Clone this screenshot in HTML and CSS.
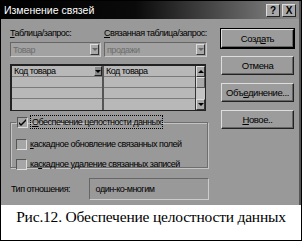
FILE: index.html
```html
<!DOCTYPE html>
<html lang="ru">
<head>
    <meta charset="UTF-8">
    <title>Изменение связей</title>
    <link rel="stylesheet" href="styles.css">
</head>
<body>
    <div class="frame">
        <div class="dialog">
            <div class="titlebar">
                <span class="title">Изменение связей</span>
                <div class="title-buttons">
                    <span class="tbtn">?</span>
                    <span class="tbtn">X</span>
                </div>
            </div>

            <div class="content">
                <div class="main">
                    <div class="labels">
                        <span class="label-left"><u>Т</u>аблица/запрос:</span>
                        <span class="label-right"><u>С</u>вязанная таблица/запрос:</span>
                    </div>

                    <div class="combos">
                        <div class="combo combo-left">
                            <span class="combo-text">Товар</span>
                            <span class="drop"><i class="arrow-down"></i></span>
                        </div>
                        <div class="combo combo-right">
                            <span class="combo-text">продажи</span>
                            <span class="drop"><i class="arrow-down"></i></span>
                        </div>
                    </div>

                    <div class="grid">
                        <div class="col col-left">
                            <div class="cell">Код товара <span class="drop cell-drop"><i class="arrow-down"></i></span></div>
                            <div class="cell"></div>
                            <div class="cell"></div>
                            <div class="cell last"></div>
                        </div>
                        <div class="col col-right">
                            <div class="cell">Код товара</div>
                            <div class="cell"></div>
                            <div class="cell"></div>
                            <div class="cell last"></div>
                        </div>
                        <div class="scrollbar">
                            <span class="sbtn"><i class="arrow-up"></i></span>
                            <span class="thumb"></span>
                            <span class="track"></span>
                            <span class="sbtn"><i class="arrow-down"></i></span>
                        </div>
                    </div>

                    <fieldset class="group">
                        <legend class="legend">
                            <span class="check-row">
                                <span class="box"><svg width="9" height="9" viewBox="0 0 9 9"><path d="M1 4 L3 6 L8 1 L8 3 L3 8 L1 6 Z" fill="#000"/></svg></span>
                                <span class="focus"><u>О</u>беспечение целостности данных</span>
                            </span>
                        </legend>
                        <div class="check-row">
                            <span class="box"></span>
                            <span><u>к</u>аскадное обновление связанных полей</span>
                        </div>
                        <div class="check-row">
                            <span class="box"></span>
                            <span>ка<u>с</u>кадное удаление связанных записей</span>
                        </div>
                    </fieldset>

                    <div class="type-row">
                        <span class="type-label">Тип отношения:</span>
                        <span class="type-value">один-ко-многим</span>
                    </div>
                </div>

                <div class="buttons">
                    <button class="btn default">Созд<u>а</u>ть</button>
                    <button class="btn">Отмена</button>
                    <button class="btn">Объ<u>е</u>динение...</button>
                    <button class="btn"><u>Н</u>овое..</button>
                </div>
            </div>
        </div>

        <div class="caption">Рис.12. Обеспечение целостности данных</div>
    </div>
</body>
</html>
```

FILE: styles.css
```css
body, html {
    margin: 0;
    padding: 0;
}

body {
    width: 302px;
    height: 241px;
    overflow: hidden;
    font-family: "Liberation Sans", Arial, sans-serif;
    font-size: 9px;
    letter-spacing: -0.5px;
    color: #000;
}

.frame {
    width: 300px;
    height: 239px;
    border: 1px solid #000;
    display: flex;
    flex-direction: column;
    background: #fff;
}

.dialog {
    height: 204px;
    background-color: #999;
    border-right: 2px solid #555;
    display: flex;
    flex-direction: column;
}

/* заголовок окна */
.titlebar {
    height: 18px;
    background: linear-gradient(to right, #000 0%, #0a0a0a 45%, #8c8c8c 100%);
    display: flex;
    align-items: center;
    justify-content: space-between;
    padding: 0 3px 0 3px;
}

.title {
    color: #fff;
    font-size: 10.5px;
    letter-spacing: 0;
}

.title-buttons {
    display: flex;
    gap: 2px;
}

.tbtn {
    width: 12px;
    height: 11px;
    background-color: #a8a8a8;
    border: 1px solid;
    border-color: #ddd #222 #222 #ddd;
    font-size: 10px;
    font-weight: bold;
    letter-spacing: 0;
    line-height: 11px;
    text-align: center;
}

.content {
    display: flex;
    padding-left: 9px;
}

.main {
    width: 199px;
    display: flex;
    flex-direction: column;
}

.labels {
    margin-top: 8px;
    height: 12px;
    display: flex;
    line-height: 12px;
    white-space: nowrap;
}

.label-left {
    width: 94px;
}

/* комбобоксы */
.combos {
    margin-top: 3px;
    display: flex;
    gap: 3px;
}

.combo {
    height: 13px;
    border: 1px solid;
    border-color: #666 #ccc #ccc #666;
    background-color: #a2a2a2;
    display: flex;
    justify-content: space-between;
    align-items: center;
}

.combo-left {
    width: 89px;
}

.combo-right {
    width: 101px;
}

.combo-text {
    color: #6e6e6e;
    padding-left: 2px;
}

.drop {
    width: 9px;
    height: 11px;
    margin-right: 1px;
    background-color: #a8a8a8;
    border: 1px solid;
    border-color: #ddd #333 #333 #ddd;
    box-sizing: border-box;
    display: flex;
    align-items: center;
    justify-content: center;
}

.combo .arrow-down {
    border-top-color: #666;
}

.arrow-down {
    width: 0;
    height: 0;
    border-left: 3px solid transparent;
    border-right: 3px solid transparent;
    border-top: 3px solid #000;
}

.arrow-up {
    width: 0;
    height: 0;
    border-left: 3px solid transparent;
    border-right: 3px solid transparent;
    border-bottom: 3px solid #000;
}

/* таблица полей */
.grid {
    margin-top: 7px;
    width: 193px;
    height: 44px;
    border: 2px solid #222;
    border-right-width: 1px;
    border-bottom-width: 1px;
    background-color: #b8b8b8;
    display: flex;
}

.col {
    display: flex;
    flex-direction: column;
}

.col-left {
    width: 91px;
    border-right: 2px solid #555;
}

.col-right {
    width: 92px;
}

.cell {
    height: 10px;
    line-height: 10px;
    border-bottom: 1px solid #7a7a7a;
    padding-left: 2px;
    display: flex;
    justify-content: space-between;
    align-items: center;
}

.cell.last {
    border-bottom: none;
}

.cell-drop {
    width: 8px;
    height: 10px;
    margin-right: 0;
    background-color: #8a8a8a;
    border-color: #bbb #222 #222 #bbb;
}

.scrollbar {
    width: 9px;
    display: flex;
    flex-direction: column;
    border-left: 1px solid #333;
}

.sbtn {
    height: 11px;
    background-color: #a8a8a8;
    border: 1px solid;
    border-color: #ddd #333 #333 #ddd;
    box-sizing: border-box;
    display: flex;
    align-items: center;
    justify-content: center;
}

.thumb {
    height: 11px;
    background-color: #a8a8a8;
    border: 1px solid;
    border-color: #ddd #555 #555 #ddd;
    box-sizing: border-box;
}

.track {
    flex: 1;
    background-color: #c4c4c4;
}

/* группа флажков */
.group {
    margin: 5px 0 0 0;
    padding: 2px 0 3px 5px;
    width: 191px;
    height: 45px;
    border: 1px solid #6e6e6e;
    box-shadow: 1px 1px 0 #c4c4c4, inset 1px 1px 0 #c4c4c4;
}

.legend {
    padding: 0 2px 0 1px;
    margin-left: 0;
}

.check-row {
    display: flex;
    align-items: center;
    gap: 3px;
    height: 12px;
    line-height: 12px;
    white-space: nowrap;
}

.group > .check-row {
    margin-top: 8px;
}

.box {
    width: 9px;
    height: 9px;
    background-color: #a6a6a6;
    border: 1px solid;
    border-color: #555 #ddd #ddd #555;
    display: flex;
}

.focus {
    outline: 1px dotted #000;
    padding: 0 1px;
}

.type-row {
    margin-top: 10px;
    display: flex;
    align-items: center;
}

.type-label {
    width: 78px;
    padding-left: 1px;
}

.type-value {
    width: 113px;
    height: 20px;
    line-height: 20px;
    padding-left: 6px;
    border: 1px solid;
    border-color: #666 #ccc #ccc #666;
}

/* кнопки справа */
.buttons {
    margin-left: 12px;
    padding-top: 10px;
    display: flex;
    flex-direction: column;
    gap: 8px;
}

.btn {
    width: 73px;
    height: 19px;
    padding: 0;
    font-family: inherit;
    font-size: 9.5px;
    letter-spacing: -0.4px;
    color: #000;
    background-color: #9c9c9c;
    border: 1px solid;
    border-color: #ddd #222 #222 #ddd;
    box-shadow: inset -1px -1px 0 #666;
}

.btn.default {
    outline: 1px solid #000;
    outline-offset: 0;
    border-color: #ddd #000 #000 #ddd;
}

.caption {
    flex: 1;
    text-align: center;
    font-family: "Liberation Serif", "Times New Roman", serif;
    font-size: 15.5px;
    padding-top: 3px;
    letter-spacing: -0.2px;
}
```
